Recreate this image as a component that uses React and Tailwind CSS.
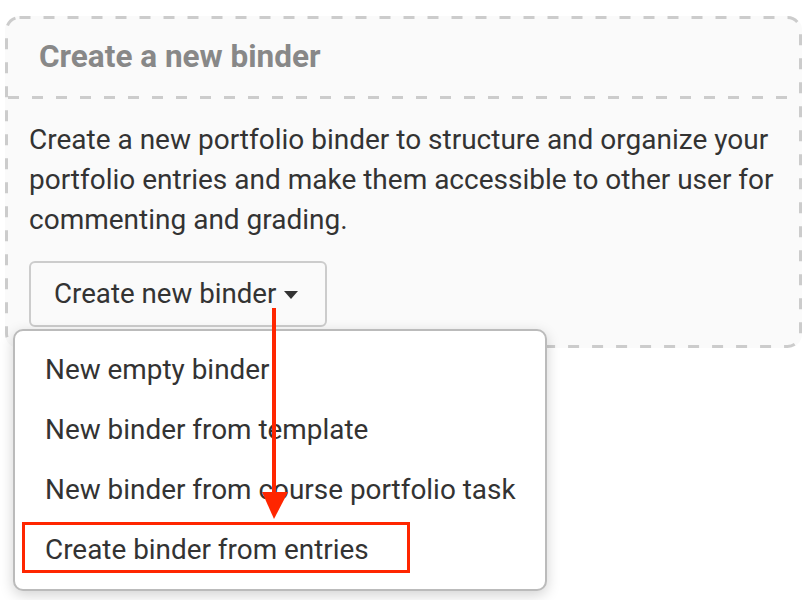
import React from "react";

const items = [
  "New empty binder",
  "New binder from template",
  "New binder from course portfolio task",
  "Create binder from entries",
];

export default function App() {
  return (
    <div
      className="relative w-[812px] h-[600px] bg-white overflow-hidden"
      style={{ fontFamily: "Roboto, 'Liberation Sans', sans-serif" }}
    >
      <div className="pt-[16px] pl-[5px]">
        {/* Binder card */}
        <div className="relative w-[797px] h-[332px] p-[3px] rounded-[14px] bg-[#fafafa]">
          <svg
            className="absolute inset-0 pointer-events-none"
            width="797"
            height="332"
            viewBox="0 0 797 332"
          >
            <rect
              x="1.5"
              y="1.5"
              width="794"
              height="329"
              rx="13"
              fill="none"
              stroke="#cccccc"
              strokeWidth="3"
              strokeDasharray="11 13"
            />
          </svg>
          <div className="h-[77px] pl-[31px] flex items-center">
            <h2 className="text-[31.5px] font-bold text-[#888888] leading-none -mt-[2px]">
              Create a new binder
            </h2>
          </div>
          <div className="h-[3px] bg-[repeating-linear-gradient(to_right,#cccccc_0_11px,transparent_11px_24px)]" />
          <div className="pl-[21px] pr-[20px] pt-[21px]">
            <p className="text-[28px] leading-[40px] text-[#333333]">
              Create a new portfolio binder to structure and organize your
              portfolio entries and make them accessible to other user for
              commenting and grading.
            </p>
            <button className="mt-[21px] h-[66px] w-[298px] pl-[23px] flex items-center gap-[8px] border-2 border-[#cccccc] rounded-[6px] bg-[#fafafa] text-[27.7px] text-[#333333]">
              <span>Create new binder</span>
              <svg width="14" height="8" viewBox="0 0 14 8" className="mt-[2px]">
                <path d="M0 0 L14 0 L7 8 Z" fill="#333333" />
              </svg>
            </button>
          </div>
        </div>
      </div>

      {/* Dropdown menu */}
      <div className="absolute left-[13px] top-[329px] w-[534px] py-[9px] bg-white border-2 border-[#bbbbbb] rounded-[10px] shadow-[0_4px_14px_rgba(0,0,0,0.18)]">
        {items.map((item) => (
          <div
            key={item}
            className="h-[60px] pl-[30px] flex items-center text-[27.9px] text-[#333333]"
          >
            {item}
          </div>
        ))}
      </div>

      {/* Highlight box */}
      <div className="absolute left-[22px] top-[522px] w-[388px] h-[51px] border-[3px] border-[#ff2600]" />

      {/* Arrow */}
      <svg
        className="absolute left-[260px] top-[308px]"
        width="30"
        height="212"
        viewBox="0 0 30 212"
      >
        <rect x="12" y="0" width="4" height="190" fill="#ff2600" />
        <path d="M2 184 L28 184 L14 211 Z" fill="#ff2600" />
      </svg>
    </div>
  );
}
